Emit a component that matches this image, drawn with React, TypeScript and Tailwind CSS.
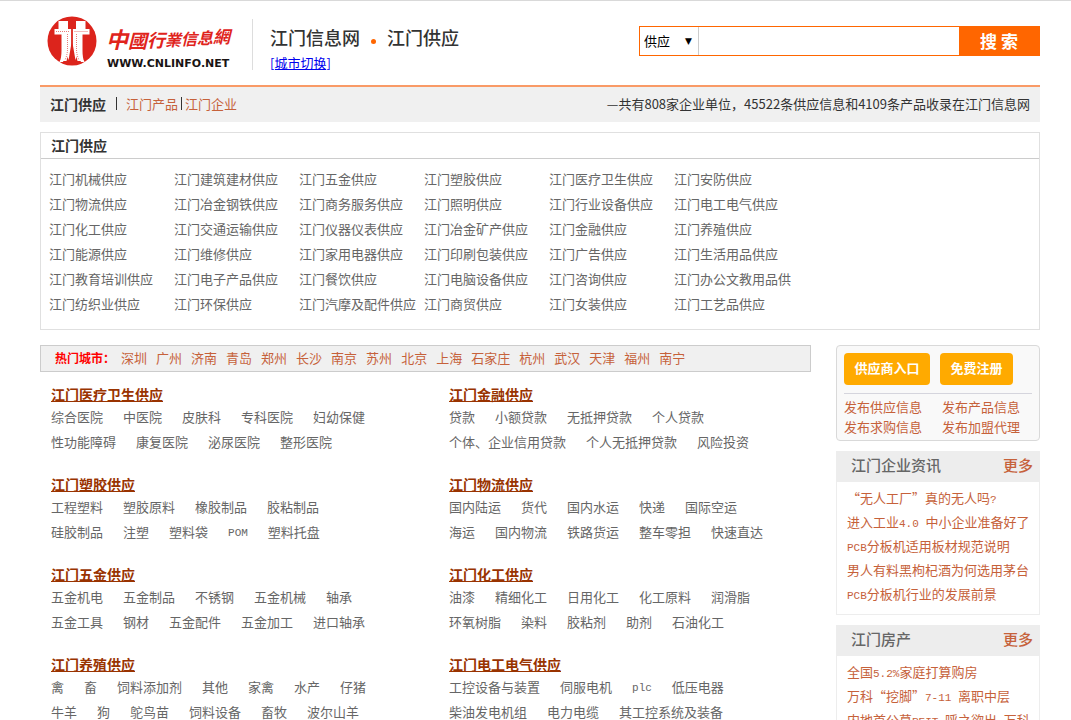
import type { ReactNode } from "react";

const categorias = [
  "江门机械供应", "江门建筑建材供应", "江门五金供应", "江门塑胶供应", "江门医疗卫生供应", "江门安防供应",
  "江门物流供应", "江门冶金钢铁供应", "江门商务服务供应", "江门照明供应", "江门行业设备供应", "江门电工电气供应",
  "江门化工供应", "江门交通运输供应", "江门仪器仪表供应", "江门冶金矿产供应", "江门金融供应", "江门养殖供应",
  "江门能源供应", "江门维修供应", "江门家用电器供应", "江门印刷包装供应", "江门广告供应", "江门生活用品供应",
  "江门教育培训供应", "江门电子产品供应", "江门餐饮供应", "江门电脑设备供应", "江门咨询供应", "江门办公文教用品供",
  "江门纺织业供应", "江门环保供应", "江门汽摩及配件供应", "江门商贸供应", "江门女装供应", "江门工艺品供应",
];

const cities = [
  "深圳", "广州", "济南", "青岛", "郑州", "长沙", "南京", "苏州",
  "北京", "上海", "石家庄", "杭州", "武汉", "天津", "福州", "南宁",
];

const groups = [
  {
    title: "江门医疗卫生供应",
    rows: [
      ["综合医院", "中医院", "皮肤科", "专科医院", "妇幼保健"],
      ["性功能障碍", "康复医院", "泌尿医院", "整形医院"],
    ],
  },
  {
    title: "江门金融供应",
    rows: [
      ["贷款", "小额贷款", "无抵押贷款", "个人贷款"],
      ["个体、企业信用贷款", "个人无抵押贷款", "风险投资"],
    ],
  },
  {
    title: "江门塑胶供应",
    rows: [
      ["工程塑料", "塑胶原料", "橡胶制品", "胶粘制品"],
      ["硅胶制品", "注塑", "塑料袋", "POM", "塑料托盘"],
    ],
  },
  {
    title: "江门物流供应",
    rows: [
      ["国内陆运", "货代", "国内水运", "快递", "国际空运"],
      ["海运", "国内物流", "铁路货运", "整车零担", "快速直达"],
    ],
  },
  {
    title: "江门五金供应",
    rows: [
      ["五金机电", "五金制品", "不锈钢", "五金机械", "轴承"],
      ["五金工具", "钢材", "五金配件", "五金加工", "进口轴承"],
    ],
  },
  {
    title: "江门化工供应",
    rows: [
      ["油漆", "精细化工", "日用化工", "化工原料", "润滑脂"],
      ["环氧树脂", "染料", "胶粘剂", "助剂", "石油化工"],
    ],
  },
  {
    title: "江门养殖供应",
    rows: [
      ["禽", "畜", "饲料添加剂", "其他", "家禽", "水产", "仔猪"],
      ["牛羊", "狗", "鸵鸟苗", "饲料设备", "畜牧", "波尔山羊"],
    ],
  },
  {
    title: "江门电工电气供应",
    rows: [
      ["工控设备与装置", "伺服电机", "plc", "低压电器"],
      ["柴油发电机组", "电力电缆", "其工控系统及装备"],
    ],
  },
];

const news = [
  "“无人工厂”真的无人吗?",
  "进入工业4.0 中小企业准备好了",
  "PCB分板机适用板材规范说明",
  "男人有料黑枸杞酒为何选用茅台",
  "PCB分板机行业的发展前景",
];

const houses = [
  "全国5.2%家庭打算购房",
  "万科“挖脚”7-11 离职中层",
  "内地首公募REIT 呼之欲出 万科",
];

// Latin runs are set in a half-width face between the Chinese characters
const Mixed = ({ text }: { text: string }) => (
  <>
    {text.split(/([\x20-\x7e]+)/).map((part, i) =>
      i % 2 ? (
        <span key={i} className="font-['Liberation_Mono',monospace] text-[11px]">{part}</span>
      ) : (
        part
      )
    )}
  </>
);

const Logo = () => (
  <a href="#" aria-label="中國行業信息網" className="block">
    <svg width="192" height="60" viewBox="0 0 192 60">
      <circle cx="25" cy="30" r="24.5" fill="#dc241c" />
      <g fill="#fff">
        <path d="M11.500 10h9.500v8h-9.500zM29 10h9.500v8h-9.500z" />
        <path d="M7.500 18h16.700v31.500h-2.200c-1.800-3-2.500-6-2.500-10v-16h-.500v16c0 4.500-1 8-3 11.500h-3.500c1.500-3 2-6.500 2-11.500v-16h-7z" />
        <path d="M42.500 18h-16.700v31.500h2.200c1.800-3 2.500-6 2.500-10v-16h.500v16c0 4.500 1 8 3 11.500h3.500c-1.500-3-2-6.500-2-11.500v-16h7z" />
        <path d="M15 23h7.500v14l-3 13h-6c1.500-3 1.500-6 1.500-11zM35 23h-7.500v14l3 13h6c-1.500-3-1.500-6-1.500-11z" />
      </g>
      {/* gap between the legs and the stitched inner outline */}
      <path d="M24.500 18h1v14l3.500 20h-8l3.500-20z" fill="#dc241c" />
      <g fill="none" stroke="#dc241c" strokeWidth="0.6" strokeDasharray="1 1">
        <path d="M9 20.500h13.500M27.500 20.500h13.500M20.500 23v15c0 4-1 8-2.500 11M29.500 23v15c0 4 1 8 2.500 11" />
      </g>
      <text x="59" y="37" fontStyle="italic" fontWeight="bold" fill="#e0241c" fontFamily="'Noto Sans CJK TC', sans-serif">
        <tspan fontSize="22">中</tspan>
        <tspan fontSize="19">國</tspan>
        <tspan fontSize="18" dy="-1">行</tspan>
        <tspan fontSize="16" dy="-1">業</tspan>
        <tspan fontSize="16" dy="-1">信</tspan>
        <tspan fontSize="16" dy="-1">息</tspan>
        <tspan fontSize="17" dy="-1">網</tspan>
      </text>
      <text x="60" y="56" fontSize="11" fontWeight="bold" fill="#1a1414" fontFamily="'DejaVu Sans', sans-serif">
        WWW.CNLINFO.NET
      </text>
    </svg>
  </a>
);

const SidePanel = ({ title, children }: { title: string; children: ReactNode }) => (
  <section className="border border-[#ededed]">
    <div className="flex h-[30px] items-center justify-between bg-[#ededed] pr-[6px] pb-1 pl-[14px] text-[15px] font-medium">
      <h2 className="text-[#666]">{title}</h2>
      <a href="#" className="text-[#c6613a]">更多</a>
    </div>
    <ul className="px-[10px] pt-1 pb-2">{children}</ul>
  </section>
);

const SideItem = ({ text }: { text: string }) => (
  <li className="h-6 leading-6 whitespace-nowrap">
    <a href="#" className="text-[#c6613a]"><Mixed text={text} /></a>
  </li>
);

export default function App() {
  return (
    <div className="min-h-screen border-t border-[#d9d9d9] bg-white pr-[31px] pl-10 font-['Noto_Sans_CJK_SC',sans-serif] text-[13px] text-[#666]">
      <header className="flex h-[84px] items-start justify-between">
        <div className="flex">
          <div className="pt-[10px] pl-[7px]">
            <Logo />
          </div>
          <div className="mt-[18px] ml-[13px] h-[51px] border-l border-[#ddd] pl-[17px]">
            <h1 className="flex h-9 items-center text-lg font-medium text-[#333]">
              江门信息网
              <span className="mx-[11px] mt-2 h-[5px] w-[5px] rounded-full bg-[#f60]" />
              江门供应
            </h1>
            <a href="#" className="block leading-4 text-[#00e] underline">[城市切换]</a>
          </div>
        </div>

        <form className="mt-[25px] flex h-[30px] w-[401px] border border-[#f60]" onSubmit={(e) => e.preventDefault()}>
          <div className="relative w-[59px] border-r border-r-[#ccc]">
            <select aria-label="类型" className="h-full w-full appearance-none bg-white pl-1 text-black outline-none">
              <option>供应</option>
              <option>产品</option>
              <option>企业</option>
            </select>
            <span className="pointer-events-none absolute top-1.5 right-1.5 font-['DejaVu_Sans',sans-serif] text-[9px] leading-4 text-black">▼</span>
          </div>
          <input type="text" aria-label="关键词" className="min-w-0 flex-1 px-2 text-black outline-none" />
          <button type="submit" className="w-20 bg-[#f60] text-[17px] font-bold text-white">搜 索</button>
        </form>
      </header>

      <nav className="flex h-[37px] items-center justify-between border-t-2 border-[#f99a66] bg-[#f0f0f0] px-[10px] pb-0.5 text-[#333]">
        <div className="flex items-center">
          <strong className="text-sm">江门供应</strong>
          <span className="mr-[9px] ml-[10px] h-[13px] w-px bg-[#333]" />
          <a href="#" className="text-[#c6613a]">江门产品</a>
          <span className="mx-[3px] h-[13px] w-px bg-[#333]" />
          <a href="#" className="text-[#c6613a]">江门企业</a>
        </div>
        <p>—共有808家企业单位，45522条供应信息和4109条产品收录在江门信息网</p>
      </nav>

      <section className="mt-[10px] border border-[#e0e0e0]">
        <h2 className="h-[26px] border-b border-[#ccc] pl-[10px] text-sm leading-6 font-bold text-[#333]">江门供应</h2>
        <ul className="grid grid-cols-[repeat(6,125px)] pt-[7px] pb-[13px] pl-2">
          {categorias.map((c) => (
            <li key={c} className="h-[25px] leading-[25px] whitespace-nowrap">
              <a href="#">{c}</a>
            </li>
          ))}
        </ul>
      </section>

      <div className="mt-[15px] flex items-start gap-[25px]">
        <main className="min-w-0 flex-1">
          <div className="flex h-[27px] items-center border border-[#ccc] bg-[#f0f0f0] pb-0.5 pl-[14px]">
            <strong className="w-[66px] text-xs text-[#f00]">热门城市：</strong>
            <ul className="flex gap-[9px]">
              {cities.map((c) => (
                <li key={c}><a href="#" className="text-[#c6613a]">{c}</a></li>
              ))}
            </ul>
          </div>

          <div className="mt-3 grid grid-cols-[398px_1fr] gap-y-5 pl-[11px]">
            {groups.map((g) => (
              <section key={g.title} className="whitespace-nowrap">
                <h3 className="h-5 text-sm leading-5 font-bold">
                  <a href="#" className="text-[#930] underline">{g.title}</a>
                </h3>
                {g.rows.map((row, i) => (
                  <ul key={i} className="flex h-[25px] items-center gap-5">
                    {row.map((item) => (
                      <li key={item}><a href="#"><Mixed text={item} /></a></li>
                    ))}
                  </ul>
                ))}
              </section>
            ))}
          </div>
        </main>

        <aside className="w-[204px] space-y-[10px]">
          <div className="rounded border border-[#d9d9d9] bg-[#f9f9f9] px-[7px] pt-[7px] pb-[3px]">
            <div className="flex gap-[10px] border-b border-[#d5d5dd] pb-2 font-bold text-white">
              <button type="button" className="h-8 w-[86px] rounded bg-[#fa0] pb-0.5">供应商入口</button>
              <button type="button" className="h-8 w-[73px] rounded bg-[#fa0] pb-0.5">免费注册</button>
            </div>
            <div className="grid grid-cols-[98px_1fr] pt-[3px] leading-5 text-[#c6613a]">
              <a href="#">发布供应信息</a>
              <a href="#">发布产品信息</a>
              <a href="#">发布求购信息</a>
              <a href="#">发布加盟代理</a>
            </div>
          </div>

          <SidePanel title="江门企业资讯">
            {news.map((n) => <SideItem key={n} text={n} />)}
          </SidePanel>
          <SidePanel title="江门房产">
            {houses.map((n) => <SideItem key={n} text={n} />)}
          </SidePanel>
        </aside>
      </div>
    </div>
  );
}
